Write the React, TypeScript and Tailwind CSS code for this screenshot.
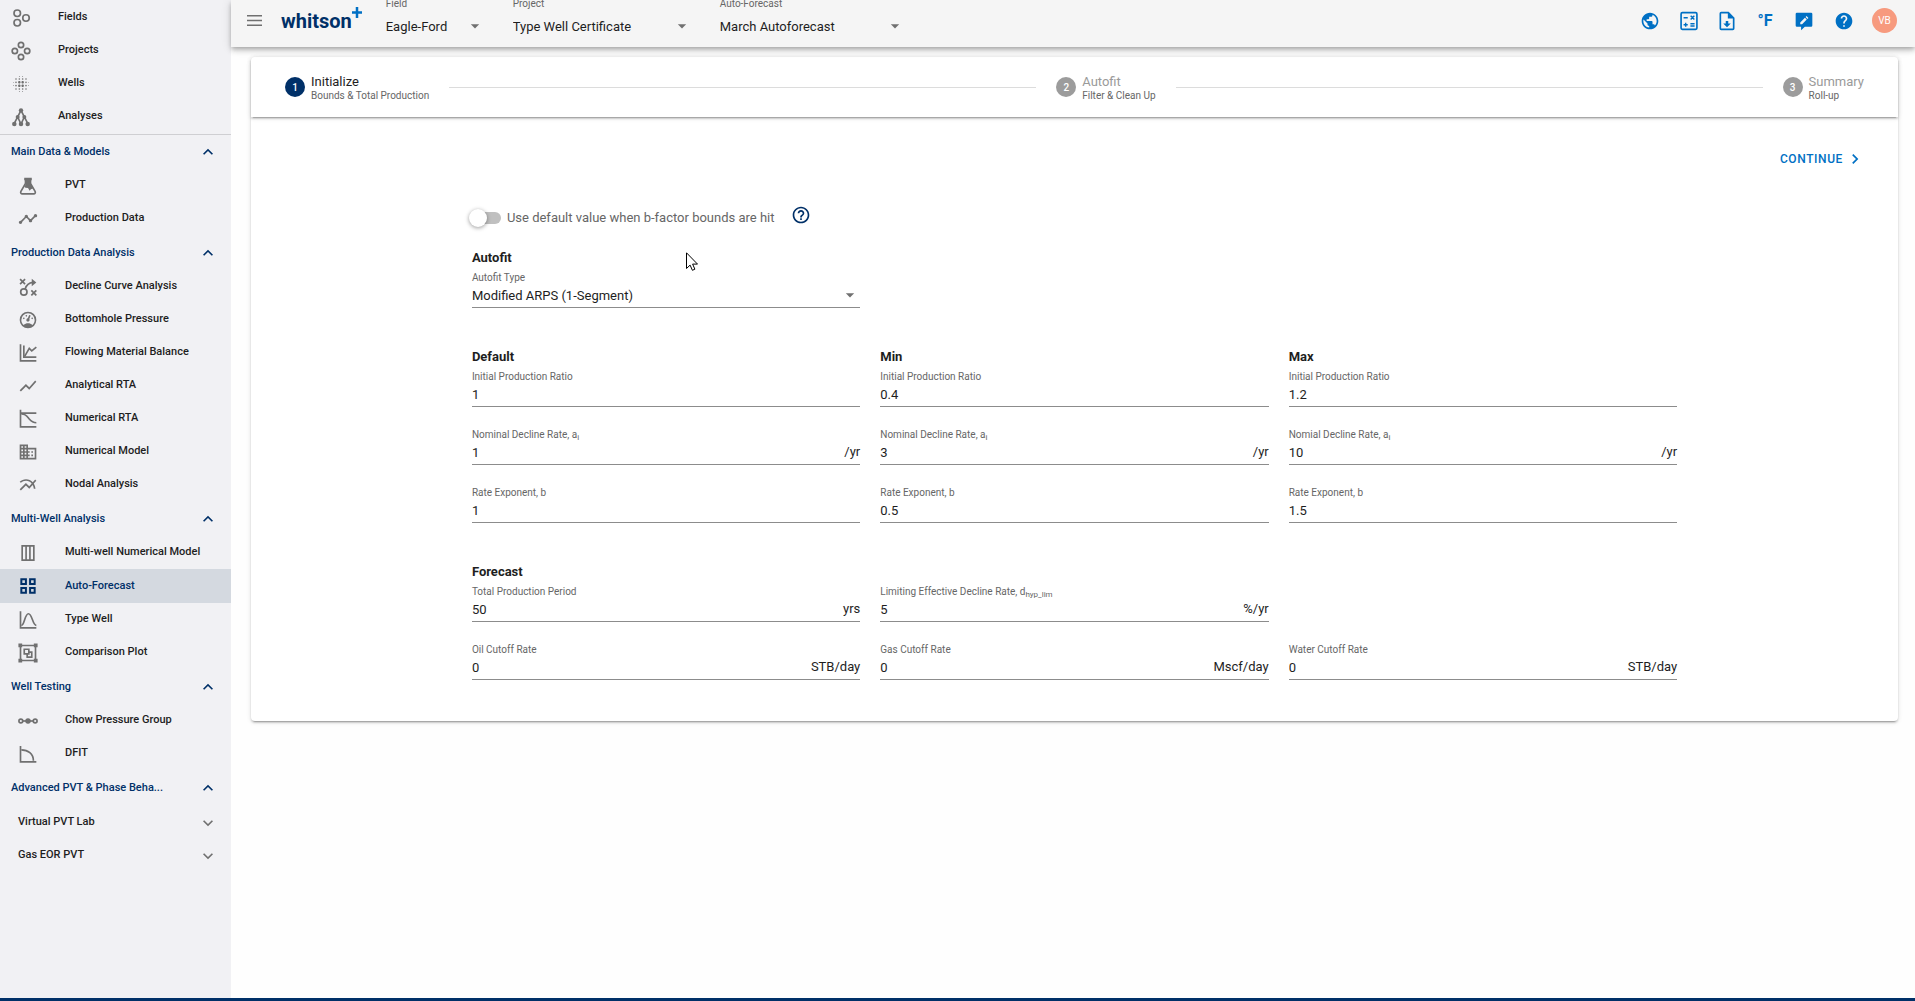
import { useState, type ReactNode } from "react";
import {
  MdArrowDropDown,
  MdBlurOn,
  MdBusiness,
  MdChevronRight,
  MdHelp,
  MdHelpOutline,
  MdKeyboardArrowDown,
  MdKeyboardArrowUp,
  MdMultilineChart,
  MdPublic,
  MdShowChart,
  MdTimeline,
} from "react-icons/md";
import { clsx } from "clsx";

function Icon({ children, filled = false }: { children: ReactNode; filled?: boolean }) {
  return (
    <svg
      viewBox="0 0 24 24"
      className="w-5 h-5"
      fill={filled ? "currentColor" : "none"}
      stroke={filled ? "none" : "currentColor"}
      strokeWidth={2}
      aria-hidden="true"
    >
      {children}
    </svg>
  );
}

const FieldsIcon = () => (
  <Icon>
    <circle cx="7.5" cy="6.3" r="3.9" />
    <circle cx="7.5" cy="17.7" r="3.9" />
    <circle cx="18" cy="12" r="3.9" />
  </Icon>
);

const ProjectsIcon = () => (
  <Icon>
    <circle cx="12" cy="4.8" r="3.2" />
    <circle cx="4.6" cy="12" r="3.2" />
    <circle cx="19.4" cy="12" r="3.2" />
    <circle cx="12" cy="19.2" r="3.2" />
  </Icon>
);

const AnalysesIcon = () => (
  <Icon>
    <path d="M12 4 3.5 20.5M12 4l8.500 16.500M8 12l4 8.500 4-8.500" />
    <g fill="currentColor" stroke="none">
      <circle cx="12" cy="4" r="2.600" />
      <circle cx="8" cy="12" r="2.400" />
      <circle cx="16" cy="12" r="2.400" />
      <circle cx="4" cy="20.500" r="2.700" />
      <circle cx="12" cy="20.500" r="2.700" />
      <circle cx="20" cy="20.500" r="2.700" />
    </g>
  </Icon>
);

const FlaskIcon = () => (
  <Icon>
    <path d="M9 3v6L3.500 18.500c-.8 1.500 0 3 1.700 3h13.600c1.700 0 2.500-1.500 1.700-3L15 9V3" strokeLinejoin="round" />
    <path d="M7.500 2h9v3h-1v4.500l3 5.200-3 1.300-1.500 1.700-2-3.200-3-.5-1.500-1 2-3V5h-2z" fill="currentColor" stroke="none" />
  </Icon>
);

const StrategyIcon = () => (
  <Icon>
    <path d="M2.500 2.500l6 6M8.500 2.500l-6 6M16 16l6 6M22 16l-6 6" />
    <circle cx="7" cy="18" r="3.800" />
    <path d="M8.500 14.500C10 9.500 13 7 18 6.500" />
    <path d="M16.500 2l5.500 4.500-5.500 4.500z" fill="currentColor" stroke="none" />
  </Icon>
);

const GaugeIcon = () => (
  <Icon filled>
    <path d="M12,2A10,10 0 0,0 2,12A10,10 0 0,0 12,22A10,10 0 0,0 22,12A10,10 0 0,0 12,2M12,4A8,8 0 0,1 20,12C20,14.4 19,16.5 17.3,18C15.9,16.7 14,16 12,16C10,16 8.2,16.7 6.7,18C5,16.5 4,14.4 4,12A8,8 0 0,1 12,4M14,5.89C13.62,5.9 13.26,6.15 13.1,6.54L11.81,9.77L11.71,10C11,10.13 10.41,10.6 10.14,11.26C9.73,12.29 10.23,13.45 11.26,13.86C12.29,14.27 13.45,13.77 13.86,12.74C14.12,12.08 14,11.32 13.57,10.76L13.67,10.5L14.96,7.29L14.97,7.26C15.17,6.75 14.92,6.17 14.41,5.96C14.28,5.91 14.15,5.89 14,5.89M10,6A1,1 0 0,0 9,7A1,1 0 0,0 10,8A1,1 0 0,0 11,7A1,1 0 0,0 10,6M7,9A1,1 0 0,0 6,10A1,1 0 0,0 7,11A1,1 0 0,0 8,10A1,1 0 0,0 7,9M17,9A1,1 0 0,0 16,10A1,1 0 0,0 17,11A1,1 0 0,0 18,10A1,1 0 0,0 17,9Z" />
  </Icon>
);

const MaterialBalanceIcon = () => (
  <Icon>
    <path d="M3 1.500v20h19" />
    <path d="M7 3v14h15" />
    <path d="M8 16l5.500-9.500 3 3L22 5" />
  </Icon>
);

const NumericalRtaIcon = () => (
  <Icon>
    <path d="M3 1v20.500h19M3 5h19" />
    <path d="M4 6c6 0 7 3 9.500 6s5 4.500 8.500 4.500" />
  </Icon>
);

const MultiWellIcon = () => (
  <Icon>
    <path d="M5 3.500h14v17H5zM9.700 3.500v17M14.300 3.500v17" />
  </Icon>
);

const GridIcon = () => (
  <Icon>
    <path d="M4 4h5.500v5.500H4zM14.500 4H20v5.500h-5.500zM4 14.500h5.500V20H4zM14.500 14.500H20V20h-5.500z" strokeWidth={2.4} />
  </Icon>
);

const BellCurveIcon = () => (
  <Icon>
    <path d="M3 1.500v20h19" />
    <path d="M4 18.500c4 0 4-14 8.500-14S17.500 18.500 22 18.500" />
  </Icon>
);

const ComparisonIcon = () => (
  <Icon>
    <path d="M3 3h18v18H3z" />
    <path d="M7.500 7.500H13V13H7.500zM13.500 11h3v6H11v-3.500" />
    <path d="M.5 .5h4.500v4.500H.5zM19 .5h4.500v4.500H19zM.5 19h4.500v4.500H.5zM19 19h4.500v4.500H19z" fill="currentColor" stroke="none" />
  </Icon>
);

const ChowIcon = () => (
  <Icon>
    <path d="M6 12h12" />
    <circle cx="3.400" cy="12" r="2.300" />
    <circle cx="20.600" cy="12" r="2.300" />
    <circle cx="12" cy="12" r="3.300" fill="currentColor" stroke="none" />
  </Icon>
);

const DfitIcon = () => (
  <Icon>
    <path d="M3 2.500v19h19" />
    <path d="M4 7c8 0 14.500 4.500 14.500 13" />
  </Icon>
);

const CalculatorIcon = () => (
  <Icon>
    <rect x="2.500" y="2" width="19" height="20" rx="1.500" />
    <path d="M5.500 8h5M14 5.800l4.400 4.400M18.400 5.800 14 10.200M5.500 16.500h5M8 14v5M13.700 15.200h5M13.700 18h5" strokeWidth={1.7} />
  </Icon>
);

const FileDownloadIcon = () => (
  <Icon filled>
    <path d="M14,1H5A2,2 0 0,0 3,3V21A2,2 0 0,0 5,23H19A2,2 0 0,0 21,21V8L14,1M19,21H5V3H13V9H19V21M12,19.500L7.500,15H10.500V12H13.500V15H16.500L12,19.500Z" />
  </Icon>
);

const CommentEditIcon = () => (
  <Icon filled>
    <path d="M3.500 2h17A1.500 1.500 0 0 1 22 3.500v14a1.500 1.500 0 0 1-1.500 1.500H13l-4.500 4V19h-5A1.500 1.500 0 0 1 2 17.500v-14A1.500 1.500 0 0 1 3.500 2z" />
    <path d="M7.500 13.800V16h2.200l5.600-5.700-2.200-2.200zM16.100 9.500l1.200-1.200-2.200-2.200-1.200 1.200z" fill="#f5f5f5" />
  </Icon>
);

type NavItem = { label: string; icon: ReactNode; active?: boolean };

const topItems: NavItem[] = [
  { label: "Fields", icon: <FieldsIcon /> },
  { label: "Projects", icon: <ProjectsIcon /> },
  { label: "Wells", icon: <MdBlurOn className="w-5 h-5" /> },
  { label: "Analyses", icon: <AnalysesIcon /> },
];

const sections: { title: string; items: NavItem[] }[] = [
  {
    title: "Main Data & Models",
    items: [
      { label: "PVT", icon: <FlaskIcon /> },
      { label: "Production Data", icon: <MdTimeline className="w-5 h-5" /> },
    ],
  },
  {
    title: "Production Data Analysis",
    items: [
      { label: "Decline Curve Analysis", icon: <StrategyIcon /> },
      { label: "Bottomhole Pressure", icon: <GaugeIcon /> },
      { label: "Flowing Material Balance", icon: <MaterialBalanceIcon /> },
      { label: "Analytical RTA", icon: <MdShowChart className="w-5 h-5" /> },
      { label: "Numerical RTA", icon: <NumericalRtaIcon /> },
      { label: "Numerical Model", icon: <MdBusiness className="w-5 h-5" /> },
      { label: "Nodal Analysis", icon: <MdMultilineChart className="w-5 h-5" /> },
    ],
  },
  {
    title: "Multi-Well Analysis",
    items: [
      { label: "Multi-well Numerical Model", icon: <MultiWellIcon /> },
      { label: "Auto-Forecast", icon: <GridIcon />, active: true },
      { label: "Type Well", icon: <BellCurveIcon /> },
      { label: "Comparison Plot", icon: <ComparisonIcon /> },
    ],
  },
  {
    title: "Well Testing",
    items: [
      { label: "Chow Pressure Group", icon: <ChowIcon /> },
      { label: "DFIT", icon: <DfitIcon /> },
    ],
  },
  { title: "Advanced PVT & Phase Beha...", items: [] },
];

function Sidebar() {
  return (
    <aside className="w-[231px] shrink-0 bg-[#f1f1f4] text-[11px] font-medium text-[#1e1e1e]">
      <nav>
        <div className="py-px border-b border-[#cfcfd2]">
          {topItems.map((item) => (
            <a key={item.label} href="#" className="flex items-center h-[33px] pl-[11px] gap-[27px]">
              <span className="text-[#707070]">{item.icon}</span>
              {item.label}
            </a>
          ))}
        </div>

        {sections.map((section) => (
          <div key={section.title} className="pb-px">
            <button className="flex items-center justify-between w-full h-[34px] pl-[11px] pr-[13px] text-left text-[#003068]">
              {section.title}
              <MdKeyboardArrowUp className="w-5 h-5" />
            </button>
            {section.items.map((item) => (
              <a
                key={item.label}
                href="#"
                className={clsx(
                  "flex items-center pl-[18px] gap-[27px]",
                  item.active ? "h-[34px] bg-[#d4d9e0] text-[#003068]" : "h-[33px]",
                )}
              >
                <span className={item.active ? "text-[#003068]" : "text-[#707070]"}>{item.icon}</span>
                {item.label}
              </a>
            ))}
          </div>
        ))}

        {["Virtual PVT Lab", "Gas EOR PVT"].map((label) => (
          <button key={label} className="flex items-center justify-between w-full h-[33px] pl-[18px] pr-[13px] text-left">
            {label}
            <MdKeyboardArrowDown className="w-5 h-5 text-[#707070]" />
          </button>
        ))}
      </nav>
    </aside>
  );
}

function HeaderSelect({ id, label, value, className }: { id: string; label: string; value: string; className: string }) {
  return (
    <div className={clsx("self-start -mt-0.5 shrink-0", className)}>
      <label htmlFor={id} className="block text-[10px] leading-3 text-[#666666]">
        {label}
      </label>
      <div className="relative mt-1">
        <select id={id} className="w-full h-6 appearance-none bg-transparent text-[13px] text-[#1e1e1e] outline-none">
          <option>{value}</option>
        </select>
        <MdArrowDropDown className="absolute right-0 top-0.5 w-5 h-5 text-[#707070] pointer-events-none" />
      </div>
    </div>
  );
}

function Header() {
  return (
    <header className="relative z-10 flex items-center h-[47px] pb-1.5 pl-4 pr-[18px] bg-[#f5f5f5] shadow-[0_2px_4px_-1px_rgba(0,0,0,0.2),0_4px_5px_0_rgba(0,0,0,0.14),0_1px_10px_0_rgba(0,0,0,0.12)]">
      <button aria-label="Toggle menu" className="w-[15px] text-[#707070]">
        <svg viewBox="0 0 15 11" className="w-[15px] h-[11px]" fill="currentColor">
          <path d="M0 0h15v1.500H0zM0 4.800h15v1.500H0zM0 9.500h15V11H0z" />
        </svg>
      </button>

      <a href="#" className="flex items-center ml-[19px] text-xl leading-6 font-bold text-[#003068]">
        whitson
        <svg viewBox="0 0 10 11" className="w-[10px] h-[11px] mb-4" fill="none" stroke="#0070c4" strokeWidth="2.500">
          <path d="M5 0v11M0 5.500h10" />
        </svg>
      </a>

      <div className="flex self-stretch flex-1 gap-7 ml-6">
        <HeaderSelect id="field" label="Field" value="Eagle-Ford" className="w-[99px]" />
        <HeaderSelect id="project" label="Project" value="Type Well Certificate" className="w-[179px]" />
        <HeaderSelect id="auto-forecast" label="Auto-Forecast" value="March Autoforecast" className="w-[185px]" />
      </div>

      <div className="flex items-center text-[#0070c4]">
        <button aria-label="Language" className="flex justify-center w-[39px]">
          <MdPublic className="w-5 h-5" />
        </button>
        <button aria-label="Calculator" className="flex justify-center w-[39px]">
          <CalculatorIcon />
        </button>
        <button aria-label="Download" className="flex justify-center w-[38px]">
          <FileDownloadIcon />
        </button>
        <button aria-label="Units" className="w-[38px] text-base leading-5 font-bold">
          °F
        </button>
        <button aria-label="Feedback" className="flex justify-center w-10">
          <CommentEditIcon />
        </button>
        <button aria-label="Help" className="flex justify-center w-10">
          <MdHelp className="w-5 h-5" />
        </button>
        <button className="w-[25px] h-[25px] ml-2 rounded-full bg-[#f79a7e] text-[10px] text-white">VB</button>
      </div>
    </header>
  );
}

function Step({ number, title, subtitle, active }: { number: number; title: string; subtitle: string; active?: boolean }) {
  return (
    <div className="flex items-center gap-1.5">
      <span
        className={clsx(
          "flex items-center justify-center w-5 h-5 rounded-full text-[10px] font-medium text-white",
          active ? "bg-[#003068]" : "bg-[#9c9c9c]",
        )}
      >
        {number}
      </span>
      <div className="pt-0.5">
        <div className={clsx("text-[13px] leading-4", active ? "text-[#1e1e1e]" : "text-[#9a9a9a]")}>{title}</div>
        <div className="text-[10px] leading-3 text-[#666666]">{subtitle}</div>
      </div>
    </div>
  );
}

type FieldProps = { id: string; label: ReactNode; value: string; unit?: string };

function Field({ id, label, value, unit }: FieldProps) {
  const [text, setText] = useState(value);
  return (
    <div className="pt-px border-b border-[#8c8c8c]">
      <label htmlFor={id} className="block h-3 text-[10px] leading-3 text-[#666666]">
        {label}
      </label>
      <div className="flex items-center h-[23px] pb-px text-[13px] text-[#1e1e1e]">
        <input
          id={id}
          value={text}
          onChange={(e) => setText(e.target.value)}
          className="flex-1 min-w-0 h-[22px] bg-transparent outline-none"
        />
        {unit && <span>{unit}</span>}
      </div>
    </div>
  );
}

const Heading = ({ children }: { children: ReactNode }) => (
  <h2 className="mb-px text-[13px] leading-6 font-bold text-[#1e1e1e]">{children}</h2>
);

const Sub = ({ children }: { children: ReactNode }) => <sub className="text-[8px] leading-none">{children}</sub>;

const bounds = [
  { title: "Default", decline: "Nominal Decline Rate, a", values: ["1", "1", "1"] },
  { title: "Min", decline: "Nominal Decline Rate, a", values: ["0.4", "3", "0.5"] },
  { title: "Max", decline: "Nomial Decline Rate, a", values: ["1.2", "10", "1.5"] },
];

function AutofitForm() {
  const [useDefault, setUseDefault] = useState(false);

  return (
    <form className="w-3/4 mx-auto mt-7">
      <div className="flex items-center h-8 mb-3">
        <input
          id="use-default"
          type="checkbox"
          role="switch"
          checked={useDefault}
          onChange={(e) => setUseDefault(e.target.checked)}
          className="relative w-7 h-3 ml-px appearance-none rounded-full bg-[#c0c0c0] before:absolute before:-left-1 before:-top-[3px] before:w-[18px] before:h-[18px] before:rounded-full before:bg-white before:shadow-[0_1px_4px_rgba(0,0,0,0.4)] checked:before:left-3.5 checked:bg-[#8fb4d8]"
        />
        <label htmlFor="use-default" className="ml-1.5 text-[13px] text-[#666666]">
          Use default value when b-factor bounds are hit
        </label>
        <button type="button" aria-label="About b-factor bounds" className="ml-4 mb-1.5 text-[#003068]">
          <MdHelpOutline className="w-5 h-5" />
        </button>
      </div>

      <div className="grid grid-cols-3 gap-x-5">
        <div>
          <Heading>Autofit</Heading>
          <div className="pt-px border-b border-[#8c8c8c]">
            <label htmlFor="autofit-type" className="block text-[10px] leading-3 text-[#666666]">
              Autofit Type
            </label>
            <div className="relative">
              <select id="autofit-type" className="block w-full h-[23px] appearance-none bg-transparent text-[13px] text-[#1e1e1e] outline-none">
                <option>Modified ARPS (1-Segment)</option>
              </select>
              <MdArrowDropDown className="absolute right-0 top-px w-5 h-5 text-[#707070] pointer-events-none" />
            </div>
          </div>
        </div>
      </div>

      <div className="grid grid-cols-3 gap-x-5 mt-[37px]">
        {bounds.map(({ title, decline, values }) => (
          <div key={title}>
            <Heading>{title}</Heading>
            <div className="grid gap-[21px]">
              <Field id={`${title}-ratio`} label="Initial Production Ratio" value={values[0]} />
              <Field id={`${title}-decline`} label={<>{decline}<Sub>i</Sub></>} value={values[1]} unit="/yr" />
              <Field id={`${title}-exponent`} label="Rate Exponent, b" value={values[2]} />
            </div>
          </div>
        ))}
      </div>

      <div className="mt-[37px]">
        <Heading>Forecast</Heading>
        <div className="grid grid-cols-3 gap-x-5 gap-y-[21px]">
          <Field id="period" label="Total Production Period" value="50" unit="yrs" />
          <Field id="limit" label={<>Limiting Effective Decline Rate, d<Sub>hyp_lim</Sub></>} value="5" unit="%/yr" />
          <div />
          <Field id="oil-cutoff" label="Oil Cutoff Rate" value="0" unit="STB/day" />
          <Field id="gas-cutoff" label="Gas Cutoff Rate" value="0" unit="Mscf/day" />
          <Field id="water-cutoff" label="Water Cutoff Rate" value="0" unit="STB/day" />
        </div>
      </div>
    </form>
  );
}

export default function App() {
  return (
    <div className="relative flex flex-col min-h-screen bg-[#fefefe] font-[Roboto,sans-serif]">
      <div className="flex flex-1">
        <Sidebar />

        <div className="flex-1 min-w-0">
          <Header />

          <main className="mt-2.5 ml-5 mr-[17px] rounded bg-white shadow-[0_3px_1px_-2px_rgba(0,0,0,0.2),0_2px_2px_0_rgba(0,0,0,0.14),0_1px_5px_0_rgba(0,0,0,0.12)]">
            <div className="flex items-center gap-5 h-[60px] px-[34px] rounded-t shadow-[0_3px_1px_-2px_rgba(0,0,0,0.2),0_2px_2px_0_rgba(0,0,0,0.14),0_1px_5px_0_rgba(0,0,0,0.12)]">
              <Step number={1} title="Initialize" subtitle="Bounds & Total Production" active />
              <hr className="flex-1 border-[#dcdcdc]" />
              <Step number={2} title="Autofit" subtitle="Filter & Clean Up" />
              <hr className="flex-1 border-[#dcdcdc]" />
              <Step number={3} title="Summary" subtitle="Roll-up" />
            </div>

            <div className="px-5 pt-[27px] pb-[41px]">
              <div className="flex justify-end">
                <button className="flex items-center gap-0.5 h-[30px] px-[13px] text-xs font-medium tracking-wider text-[#0070c4]">
                  CONTINUE
                  <MdChevronRight className="w-5 h-5" />
                </button>
              </div>
              <AutofitForm />
            </div>
          </main>
        </div>
      </div>

      <footer className="h-[3px] bg-[#003068]" />

      {/* Mouse pointer */}
      <svg viewBox="0 0 12 19" className="absolute left-[686px] top-[252px] w-3 h-[19px] pointer-events-none" fill="white" stroke="black">
        <path d="M.5 .8v15.700l3.600-3.400 2.300 5.200 2.500-1.100-2.300-5.100h4.900z" />
      </svg>
    </div>
  );
}
